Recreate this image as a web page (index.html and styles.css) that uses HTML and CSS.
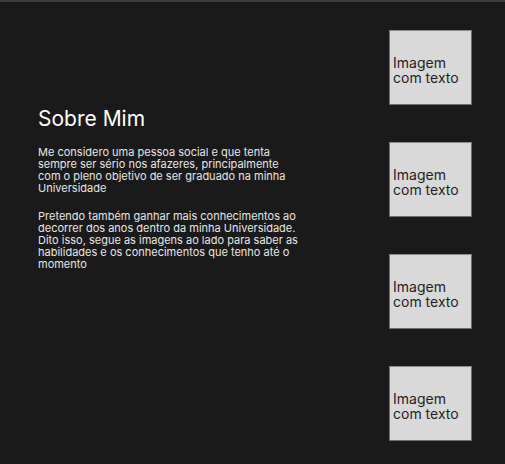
FILE: index.html
```html
<!DOCTYPE html>
<html lang="pt">
<head>
<meta charset="utf-8">
<link rel="stylesheet" href="styles.css">
</head>
<body>
<div class="page">
  <section class="about">
    <h1 class="title">Sobre Mim</h1>
    <p class="text">Me considero uma pessoa social e que tenta sempre ser sério nos afazeres, principalmente com o pleno objetivo de ser graduado na minha Universidade</p>
    <p class="text">Pretendo também ganhar mais conhecimentos ao decorrer dos anos dentro da minha Universidade. Dito isso, segue as imagens ao lado para saber as habilidades e os conhecimentos que tenho até o momento</p>
  </section>
  <aside class="gallery">
    <div class="card">Imagem com texto</div>
    <div class="card">Imagem com texto</div>
    <div class="card">Imagem com texto</div>
    <div class="card">Imagem com texto</div>
  </aside>
</div>
</body>
</html>
```
FILE: styles.css
```css
html, body {
  margin: 0;
  padding: 0;
  height: 100%;
}
body {
  background: #1a1a1a;
  border-top: 2px solid #3c3c3c;
  box-sizing: border-box;
  font-family: Inter, "Noto Sans", sans-serif;
}
.page {
  display: flex;
  justify-content: space-between;
  padding: 28px 33px 0 38px;
}
.about {
  width: 262px;
  padding-top: 76px;
}
.title {
  margin: 0 0 14px;
  font-size: 21px;
  font-weight: 400;
  color: #ffffff;
  line-height: 26px;
}
.text {
  margin: 0 0 16px;
  font-size: 11px;
  line-height: 12px;
  color: #e6e6e6;
}
.gallery {
  display: flex;
  flex-direction: column;
  gap: 37px;
}
.card {
  width: 83px;
  height: 75px;
  box-sizing: border-box;
  background: #d9d9d9;
  border: 1px solid #6e6e6e;
  border-top-color: #8a8a8a;
  display: flex;
  align-items: center;
  padding: 5px 2px 0 3px;
  font-size: 14px;
  line-height: 15px;
  color: #1e1e1e;
}
```
